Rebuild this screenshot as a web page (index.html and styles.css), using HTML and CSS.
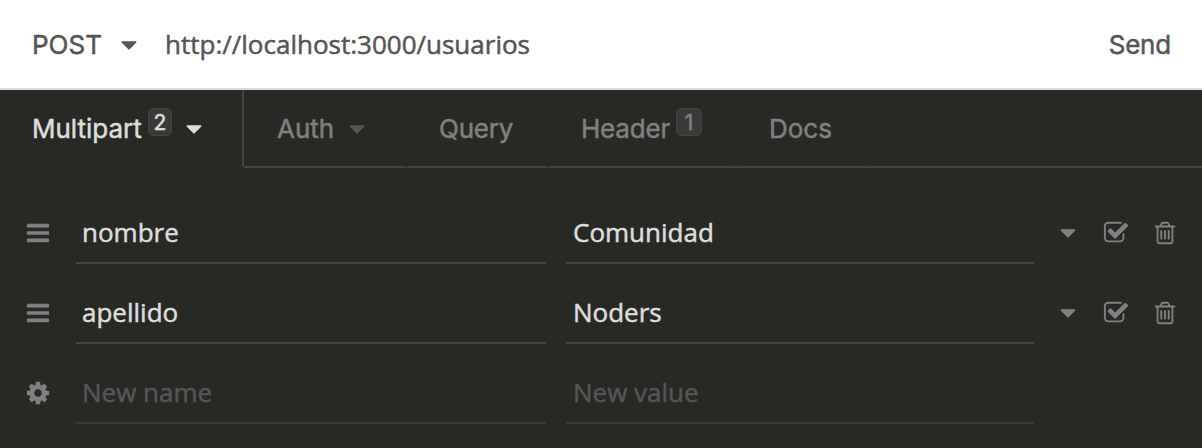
FILE: index.html
```html
<!DOCTYPE html>
<html lang="es">
<head>
<meta charset="utf-8">
<title>Request</title>
<link rel="stylesheet" href="styles.css">
</head>
<body>
<svg class="defs" aria-hidden="true">
  <symbol id="caret" viewBox="0 0 1792 1792"><path d="M1408 704q0 26-19 45l-448 448q-19 19-45 19t-45-19l-448-448q-19-19-19-45t19-45 45-19h896q26 0 45 19t19 45z"/></symbol>
  <symbol id="bars" viewBox="0 0 1792 1792"><path d="M1664 1344v128q0 26-19 45t-45 19h-1408q-26 0-45-19t-19-45v-128q0-26 19-45t45-19h1408q26 0 45 19t19 45zm0-512v128q0 26-19 45t-45 19h-1408q-26 0-45-19t-19-45v-128q0-26 19-45t45-19h1408q26 0 45 19t19 45zm0-512v128q0 26-19 45t-45 19h-1408q-26 0-45-19t-19-45v-128q0-26 19-45t45-19h1408q26 0 45 19t19 45z"/></symbol>
  <symbol id="check" viewBox="0 0 1792 1792"><path d="M1472 930v318q0 119-84.500 203.500t-203.500 84.500h-832q-119 0-203.500-84.500t-84.500-203.500v-832q0-119 84.500-203.500t203.500-84.500h832q63 0 117 25 15 7 18 23 3 17-9 29l-49 49q-10 10-23 10-3 0-9-2-23-6-45-6h-832q-66 0-113 47t-47 113v832q0 66 47 113t113 47h832q66 0 113-47t47-113v-254q0-13 9-22l64-64q10-10 23-10 6 0 12 3 20 8 20 29zm231-489l-814 814q-24 24-57 24t-57-24l-430-430q-24-24-24-57t24-57l110-110q24-24 57-24t57 24l263 263 647-647q24-24 57-24t57 24l110 110q24 24 24 57t-24 57z"/></symbol>
  <symbol id="trash" viewBox="0 0 1792 1792"><path d="M704 736v576q0 14-9 23t-23 9h-64q-14 0-23-9t-9-23v-576q0-14 9-23t23-9h64q14 0 23 9t9 23zm256 0v576q0 14-9 23t-23 9h-64q-14 0-23-9t-9-23v-576q0-14 9-23t23-9h64q14 0 23 9t9 23zm256 0v576q0 14-9 23t-23 9h-64q-14 0-23-9t-9-23v-576q0-14 9-23t23-9h64q14 0 23 9t9 23zm128 724v-948h-896v948q0 22 7 40.500t14.500 27 10.500 8.500h832q3 0 10.500-8.500t14.500-27 7-40.500zm-672-1076h448l-48-117q-7-9-17-11h-317q-10 2-17 11zm928 32v64q0 14-9 23t-23 9h-96v948q0 83-47 143.500t-113 60.500h-832q-66 0-113-58.500t-47-141.500v-952h-96q-14 0-23-9t-9-23v-64q0-14 9-23t23-9h309l70-167q15-37 54-63t79-26h320q40 0 79 26t54 63l70 167h309q14 0 23 9t9 23z"/></symbol>
  <symbol id="cog" viewBox="0 0 1792 1792"><path d="M1152 896q0-106-75-181t-181-75-181 75-75 181 75 181 181 75 181-75 75-181zm512-109v222q0 12-8 23t-20 13l-185 28q-19 54-39 91 35 50 107 138 10 12 10 25t-9 23q-27 37-99 108t-94 71q-12 0-26-9l-138-108q-44 23-91 38-16 136-29 186-7 28-36 28h-222q-14 0-24.500-8.500t-11.500-21.500l-28-184q-49-16-90-37l-141 107q-10 9-25 9-14 0-25-11-126-114-165-168-7-10-7-23 0-12 8-23 15-21 51-66.500t54-70.500q-27-50-41-99l-183-27q-13-2-21-12.500t-8-23.500v-222q0-12 8-23t19-13l186-28q14-46 39-92-40-57-107-138-10-12-10-24 0-10 9-23 26-36 98.500-107.500t94.500-71.500q13 0 26 10l138 107q44-23 91-38 16-136 29-186 7-28 36-28h222q14 0 24.500 8.500t11.500 21.500l28 184q49 16 90 37l142-107q9-9 24-9 13 0 25 10 129 119 165 170 7 8 7 22 0 12-8 23-15 21-51 66.500t-54 70.500q26 50 41 98l183 28q13 2 21 12.500t8 23.500z"/></symbol>
</svg>
<header class="urlbar">
  <div class="method"><span>POST</span><svg class="icon"><use href="#caret"/></svg></div>
  <div class="url">http://localhost:3000/usuarios</div>
  <div class="send">Send</div>
</header>
<nav class="tabs">
  <div class="tab tab-multipart"><span class="label">Multipart</span><span class="badge">2</span><svg class="icon"><use href="#caret"/></svg></div>
  <div class="tab tab-auth"><span class="label">Auth</span><svg class="icon"><use href="#caret"/></svg></div>
  <div class="tab tab-query"><span class="label">Query</span></div>
  <div class="tab tab-header"><span class="label">Header</span><span class="badge">1</span></div>
  <div class="tab tab-docs"><span class="label">Docs</span></div>
  <div class="tab-rest"></div>
</nav>
<main class="rows">
  <div class="row">
    <svg class="icon"><use href="#bars"/></svg>
    <div class="field name">nombre</div>
    <div class="field">Comunidad</div>
    <svg class="icon caret"><use href="#caret"/></svg>
    <svg class="icon check"><use href="#check"/></svg>
    <svg class="icon"><use href="#trash"/></svg>
  </div>
  <div class="row">
    <svg class="icon"><use href="#bars"/></svg>
    <div class="field name">apellido</div>
    <div class="field">Noders</div>
    <svg class="icon caret"><use href="#caret"/></svg>
    <svg class="icon check"><use href="#check"/></svg>
    <svg class="icon"><use href="#trash"/></svg>
  </div>
  <div class="row new">
    <svg class="icon"><use href="#cog"/></svg>
    <div class="field name">New name</div>
    <div class="field">New value</div>
  </div>
</main>
</body>
</html>
```
FILE: styles.css
```css
* { box-sizing: border-box; }
body {
  margin: 0;
  height: 448px;
  overflow: hidden;
  background: #282925;
  font: 26px/36px Inter, "Liberation Sans", sans-serif;
  color: #808080;
  -webkit-text-stroke: 0.5px currentColor;
}
.defs { display: none; }
.icon { width: 26px; height: 26px; flex: none; fill: currentColor; }

.urlbar {
  display: flex;
  height: 90px;
  padding: 2px 31px 0 32px;
  align-items: center;
  background: #fff;
  border-bottom: 2px solid #d9dbd8;
  color: #555;
}
.method { display: flex; width: 133px; align-items: center; justify-content: space-between; padding-right: 23px; }
.url { flex: 1; padding-bottom: 2px; font-family: "Open Sans", "Noto Sans", sans-serif; }
.send { letter-spacing: -0.2px; }

.tabs { display: flex; height: 78px; }
.tab {
  display: flex;
  align-items: center;
  padding: 2px 0 0 32px;
  border: solid transparent;
  border-width: 0 1px 2px;
  border-bottom-color: #45453f;
}
.tab-multipart {
  width: 244px;
  border-width: 0 2px 2px 0;
  border-color: transparent #45453f transparent transparent;
  color: #ddd;
}
.tab-auth { width: 162px; }
.tab-auth .icon { margin-left: 10px; color: #555; }
.tab-query { width: 142px; letter-spacing: -0.2px; }
.tab-header { width: 188px; letter-spacing: -0.2px; }
.tab-docs { width: 130px; }
.tab-rest { flex: 1; border-bottom: 2px solid #45453f; }
.tab-multipart .icon { margin-left: 8px; }
.badge {
  width: 24px;
  height: 28px;
  margin: 0 0 14px 6px;
  border: 1px solid #42423f;
  border-radius: 5px;
  background: #3a3a38;
  font-size: 21px;
  line-height: 28px;
  letter-spacing: 0;
  text-align: center;
}
.tab-multipart .badge { margin-right: 1px; }
.tab-header .badge { width: 26px; }

.rows { padding: 16px 24px 0 25px; }
.row { display: flex; height: 80px; align-items: flex-end; }
.row .icon { margin-bottom: 18.4px; }
.field {
  flex: none;
  width: 468px;
  height: 60px;
  margin-left: 20px;
  padding: 10px 7px 0;
  border-bottom: 2px solid #45453f;
  color: #ddd;
  font-family: "Open Sans", "Noto Sans", sans-serif;
}
.field.name { width: 470px; margin-left: 25px; padding-left: 6px; }
.caret { margin-left: 20.5px; }
.check { margin: 0 22.5px; }
.new .field { color: #555; border-color: #393a35; }
```
